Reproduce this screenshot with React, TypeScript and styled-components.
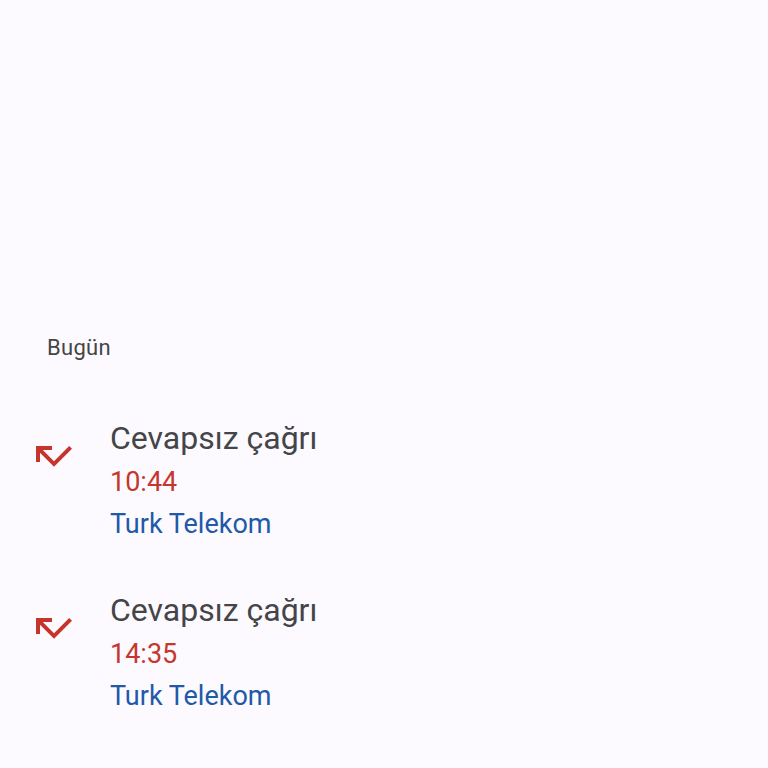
import React from "react";
import styled, { createGlobalStyle } from "styled-components";

const GlobalStyle = createGlobalStyle`
  html, body {
    margin: 0;
    padding: 0;
    background: #fcfaff;
  }
  body {
    font-family: Roboto, "Noto Sans", "Liberation Sans", sans-serif;
    -webkit-font-smoothing: antialiased;
  }
`;

const Page = styled.div`
  display: flex;
  flex-direction: column;
  padding-top: 334px;
  height: 768px;
  box-sizing: border-box;
  overflow: hidden;
`;

const SectionHeader = styled.div`
  padding-left: 47px;
  font-size: 22px;
  line-height: 28px;
  letter-spacing: 0.3px;
  color: #454545;
  margin-bottom: 58px;
`;

const List = styled.div`
  display: flex;
  flex-direction: column;
  gap: 47px;
`;

const Row = styled.div`
  display: flex;
  align-items: flex-start;
`;

const IconBox = styled.div`
  width: 48px;
  height: 48px;
  margin: 12px 32px 0 30px;
  flex-shrink: 0;
  color: #c5352b;
`;

const Texts = styled.div`
  display: flex;
  flex-direction: column;
`;

const Title = styled.div`
  font-size: 32px;
  line-height: 36px;
  padding-bottom: 5px;
  color: #444548;
`;

const Time = styled.div`
  font-size: 27px;
  line-height: 42px;
  color: #c5372d;
`;

const Carrier = styled.div`
  font-size: 27px;
  line-height: 42px;
  color: #2159a8;
`;

const MissedIcon = () => (
  <svg viewBox="0 0 24 24" width="48" height="48" fill="currentColor">
    <path d="M19.59 7L12 14.59 6.41 9H11V7H3v8h2v-4.59l7 7 9-9z" />
  </svg>
);

const calls = [
  { time: "10:44" },
  { time: "14:35" },
  { time: "09:12" },
];

export default function App() {
  return (
    <>
      <GlobalStyle />
      <Page>
        <SectionHeader>Bugün</SectionHeader>
        <List>
          {calls.map((c, i) => (
            <Row key={i}>
              <IconBox>
                <MissedIcon />
              </IconBox>
              <Texts>
                <Title>Cevapsız çağrı</Title>
                <Time>{c.time}</Time>
                <Carrier>Turk Telekom</Carrier>
              </Texts>
            </Row>
          ))}
        </List>
      </Page>
    </>
  );
}
